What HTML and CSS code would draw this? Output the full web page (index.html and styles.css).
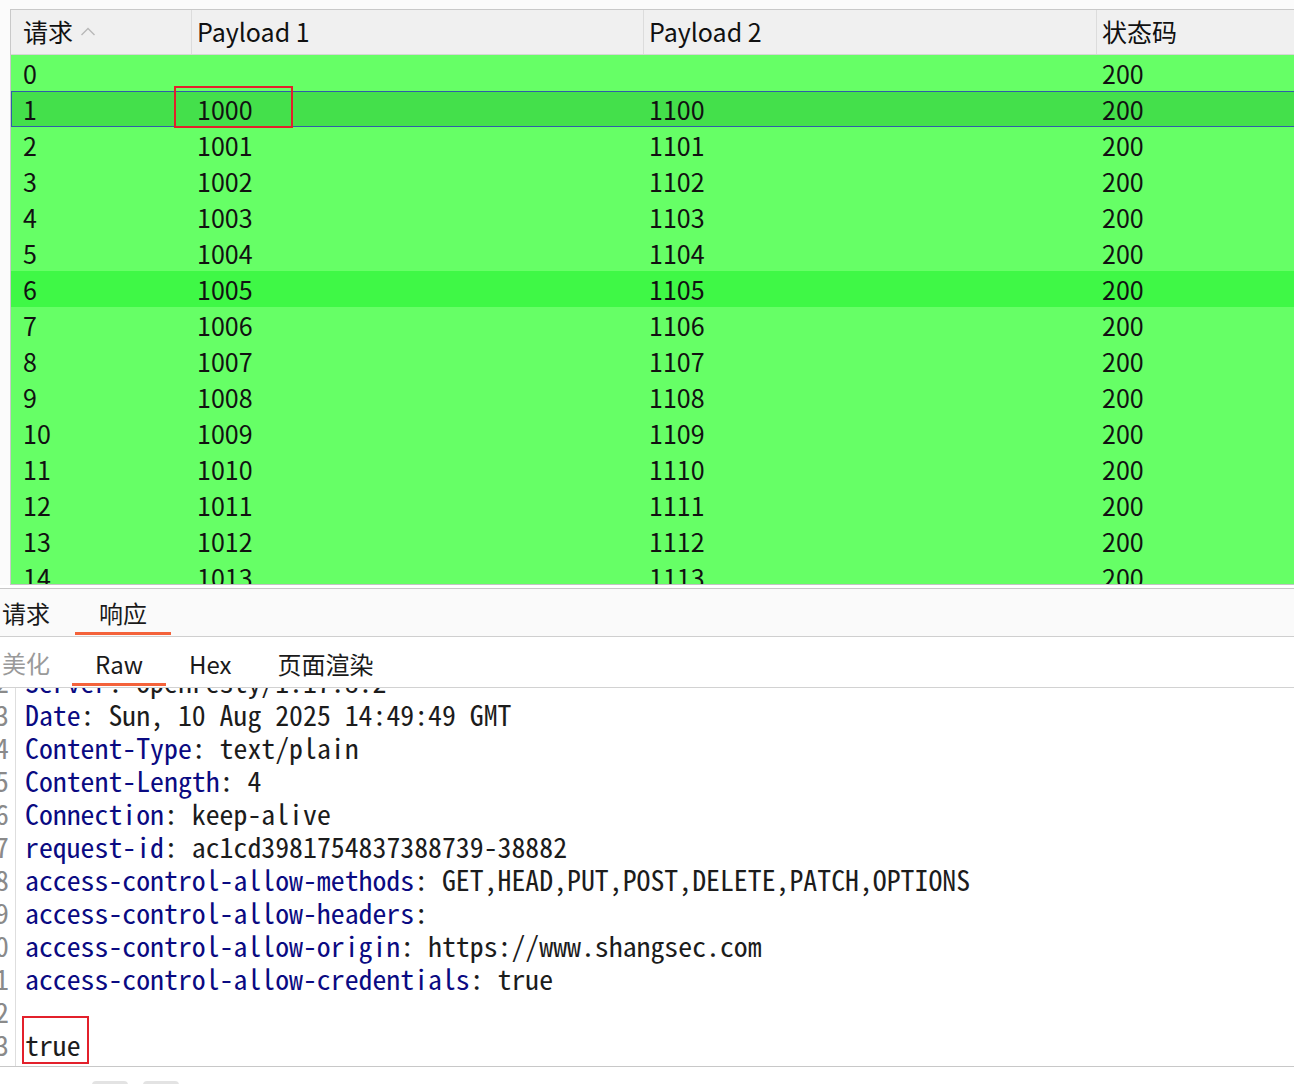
FILE: index.html
```html
<!DOCTYPE html>
<html lang="zh">
<head>
<meta charset="utf-8">
<title>Intruder results</title>
<link rel="stylesheet" href="styles.css">
</head>
<body>
<div class="page">
  <div class="results">
    <div class="table">
      <div class="row head">
        <div class="cell c1">请求<svg class="sort" width="16" height="9" viewBox="0 0 16 9"><polyline points="1.5,8 8,1.5 14.5,8" fill="none" stroke="#b8b8b8" stroke-width="1.4"/></svg></div>
        <div class="cell">Payload 1</div>
        <div class="cell">Payload 2</div>
        <div class="cell">状态码</div>
      </div>
      <div class="row"><div class="cell c1">0</div><div class="cell"></div><div class="cell"></div><div class="cell">200</div></div>
      <div class="row selected"><div class="cell c1">1</div><div class="cell"><span class="mark-cell">1000</span></div><div class="cell">1100</div><div class="cell">200</div></div>
      <div class="row"><div class="cell c1">2</div><div class="cell">1001</div><div class="cell">1101</div><div class="cell">200</div></div>
      <div class="row"><div class="cell c1">3</div><div class="cell">1002</div><div class="cell">1102</div><div class="cell">200</div></div>
      <div class="row"><div class="cell c1">4</div><div class="cell">1003</div><div class="cell">1103</div><div class="cell">200</div></div>
      <div class="row"><div class="cell c1">5</div><div class="cell">1004</div><div class="cell">1104</div><div class="cell">200</div></div>
      <div class="row hover"><div class="cell c1">6</div><div class="cell">1005</div><div class="cell">1105</div><div class="cell">200</div></div>
      <div class="row"><div class="cell c1">7</div><div class="cell">1006</div><div class="cell">1106</div><div class="cell">200</div></div>
      <div class="row"><div class="cell c1">8</div><div class="cell">1007</div><div class="cell">1107</div><div class="cell">200</div></div>
      <div class="row"><div class="cell c1">9</div><div class="cell">1008</div><div class="cell">1108</div><div class="cell">200</div></div>
      <div class="row"><div class="cell c1">10</div><div class="cell">1009</div><div class="cell">1109</div><div class="cell">200</div></div>
      <div class="row"><div class="cell c1">11</div><div class="cell">1010</div><div class="cell">1110</div><div class="cell">200</div></div>
      <div class="row"><div class="cell c1">12</div><div class="cell">1011</div><div class="cell">1111</div><div class="cell">200</div></div>
      <div class="row"><div class="cell c1">13</div><div class="cell">1012</div><div class="cell">1112</div><div class="cell">200</div></div>
      <div class="row"><div class="cell c1">14</div><div class="cell">1013</div><div class="cell">1113</div><div class="cell">200</div></div>
    </div>
  </div>

  <div class="tabs main-tabs">
    <div class="tab first">请求</div>
    <div class="tab active">响应</div>
  </div>
  <div class="tabs sub-tabs">
    <div class="tab first muted">美化</div>
    <div class="tab active">Raw</div>
    <div class="tab">Hex</div>
    <div class="tab">页面渲染</div>
  </div>

  <div class="editor">
    <div class="gutter">
      <div class="scroll">
        <div class="ln">1</div><div class="ln">2</div><div class="ln">3</div><div class="ln">4</div>
        <div class="ln">5</div><div class="ln">6</div><div class="ln">7</div><div class="ln">8</div>
        <div class="ln">9</div><div class="ln">10</div><div class="ln">11</div><div class="ln">12</div>
        <div class="ln">13</div>
      </div>
    </div>
    <div class="code">
      <div class="scroll">
        <div class="line"><span class="v">HTTP/1.1 200 OK</span></div>
        <div class="line"><span class="k">Server</span><span class="v">: openresty/1.17.8.2</span></div>
        <div class="line"><span class="k">Date</span><span class="v">: Sun, 10 Aug 2025 14:49:49 GMT</span></div>
        <div class="line"><span class="k">Content-Type</span><span class="v">: text/plain</span></div>
        <div class="line"><span class="k">Content-Length</span><span class="v">: 4</span></div>
        <div class="line"><span class="k">Connection</span><span class="v">: keep-alive</span></div>
        <div class="line"><span class="k">request-id</span><span class="v">: ac1cd3981754837388739-38882</span></div>
        <div class="line"><span class="k">access-control-allow-methods</span><span class="v">: GET,HEAD,PUT,POST,DELETE,PATCH,OPTIONS</span></div>
        <div class="line"><span class="k">access-control-allow-headers</span><span class="v">:</span></div>
        <div class="line"><span class="k">access-control-allow-origin</span><span class="v">: https://www.shangsec.com</span></div>
        <div class="line"><span class="k">access-control-allow-credentials</span><span class="v">: true</span></div>
        <div class="line"></div>
        <div class="line"><span class="v mark-body">true</span></div>
      </div>
    </div>
  </div>

  <div class="footer">
    <span class="btn"></span><span class="btn"></span>
  </div>
</div>
</body>
</html>
```

FILE: styles.css
```css
*, *::before, *::after { box-sizing: border-box; }

html, body {
  margin: 0;
  padding: 0;
  background: #ffffff;
}

body {
  width: 1294px;
  height: 1084px;
  overflow: hidden;
  font-family: "Noto Sans CJK SC", "Noto Sans", sans-serif;
  color: #111;
}

.page {
  display: flex;
  flex-direction: column;
  width: 1294px;
}

/* ---------- results table ---------- */
.results {
  padding: 9px 0 0 10px;
  background: #fbfbfb;
}

.table {
  height: 576px;
  overflow: hidden;
  border-top: 1px solid #c9c9c9;
  border-left: 1px solid #c9c9c9;
  border-bottom: 1px solid #c4c4c4;
  background: #66ff66;
}

.row {
  display: grid;
  grid-template-columns: 180px 452px 453px 1fr;
  height: 36px;
  align-items: center;
  font-size: 25px;
  line-height: 36px;
  background: #66ff66;
}

.cell {
  padding-left: 6px;
  white-space: nowrap;
  height: 36px;
}

.cell.c1 { padding-left: 12px; }

.row.head {
  height: 45px;
  background: #f0f0f0;
  border-bottom: 1px solid #d6d6d6;
}

.row.head .cell {
  height: 44px;
  line-height: 43px;
  border-left: 1px solid #dcdcdc;
  padding-left: 5px;
  color: #111;
}

.row.head .cell.c1 {
  border-left: none;
  padding-left: 12px;
}

.sort {
  margin-left: 7px;
  vertical-align: 6px;
}

.row.selected {
  background: #44e04b;
  box-shadow: inset 0 1px 0 #2e5ea8, inset 0 -1px 0 #2e5ea8, inset 1px 0 0 #2e5ea8;
}

.row.hover {
  background: #3ff846;
}

.mark-cell {
  position: relative;
}

.mark-cell::after {
  content: "";
  position: absolute;
  left: -23px;
  top: -5px;
  width: 119px;
  height: 42px;
  border: 2px solid #e3202b;
}

/* ---------- tabs ---------- */
.tabs {
  display: flex;
  align-items: stretch;
  font-size: 24px;
}

.main-tabs {
  margin-top: 3px;
  height: 49px;
  background: #fafafa;
  border-top: 1px solid #c8c8c8;
  border-bottom: 1px solid #cfcfcf;
}

.sub-tabs {
  height: 51px;
  background: #ffffff;
  border-bottom: 1px solid #d2d2d2;
}

.tab {
  position: relative;
  display: flex;
  align-items: center;
  padding: 0 24px;
  color: #1a1a1a;
  white-space: nowrap;
}

.main-tabs .tab.first { padding: 0 25px 0 2px; }
.sub-tabs .tab { padding: 0 23px; }
.sub-tabs .tab.first { padding: 0 22px 0 2px; }
.sub-tabs .tab { padding-top: 2px; }

.tab.muted { color: #9a9a9a; }

.tab.active::after {
  content: "";
  position: absolute;
  left: 0;
  right: 0;
  bottom: 1px;
  height: 3px;
  background: #f4623a;
}

/* ---------- editor ---------- */
.editor {
  display: flex;
  height: 379px;
  border-bottom: 1px solid #c8c8c8;
  overflow: hidden;
  font-family: "Noto Sans Mono CJK SC", "Liberation Mono", monospace;
  font-size: 27.8px;
  line-height: 33px;
}

.gutter {
  width: 16px;
  flex: none;
  overflow: hidden;
  border-right: 1px solid #dedede;
  color: #8a8a8a;
}

.scroll {
  margin-top: -56px;
}

.ln {
  height: 33px;
  display: flex;
  justify-content: flex-end;
  padding-right: 6px;
  white-space: nowrap;
}

.code {
  flex: 1;
  padding-left: 9px;
  overflow: hidden;
}

.line {
  height: 33px;
  white-space: pre;
}

.k { color: #0a0a82; }
.v { color: #1c1c1c; }

.mark-body {
  position: relative;
}

.mark-body::after {
  content: "";
  position: absolute;
  left: -3px;
  top: -8px;
  width: 67px;
  height: 48px;
  border: 2px solid #e3202b;
}

/* ---------- footer ---------- */
.footer {
  display: flex;
  gap: 15px;
  padding: 14px 0 0 92px;
}

.btn {
  display: block;
  width: 36px;
  height: 12px;
  border-radius: 4px;
  background: #e3e3e3;
}
```
